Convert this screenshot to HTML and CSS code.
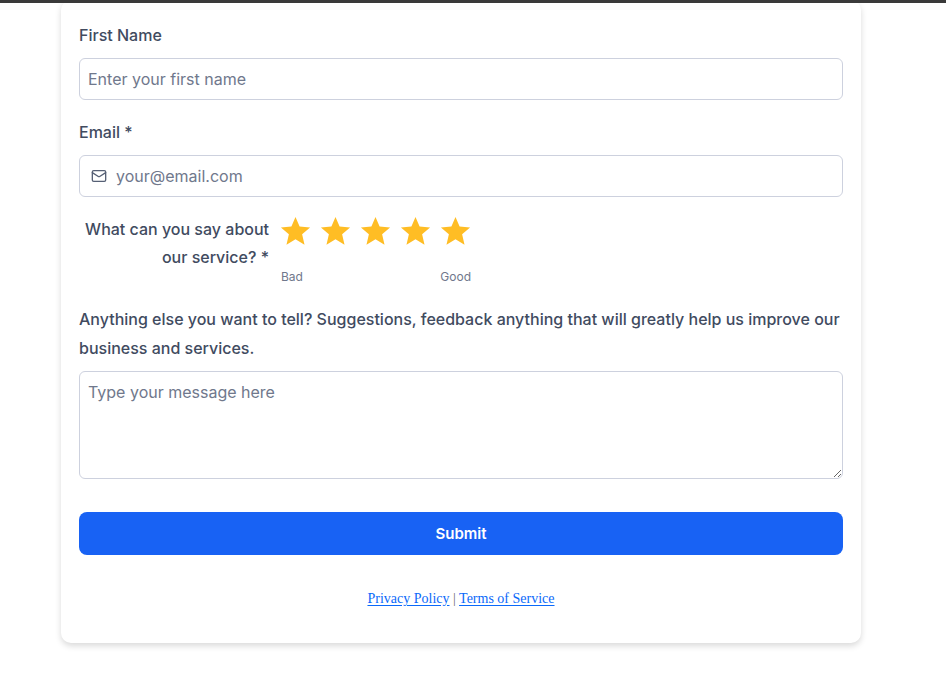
FILE: index.html
```html
<html>
<head>
<title>Feedback form</title>
<link rel="stylesheet" href="styles.css">
</head>
<body>
<div class='topbar'></div>
<div class='card'>
  <form>
    <div class='field first'>
      <label>First Name</label>
      <div class='input'><span class='placeholder'>Enter your first name</span></div>
    </div>
    <div class='field email'>
      <label>Email *</label>
      <div class='input'>
        <svg viewBox="0 0 24 24" width="16" height="16" fill="none" stroke="#566075" stroke-width="2" stroke-linecap="round" stroke-linejoin="round">
          <rect x="2" y="4" width="20" height="16" rx="2"/>
          <path d="M22 7l-8.97 5.7a1.94 1.94 0 0 1-2.06 0L2 7"/>
        </svg>
        <span class='placeholder'>your@email.com</span>
      </div>
    </div>
    <div class='rating'>
      <div class='question'>What can you say about our service? *</div>
      <div class='scale'>
        <div class='stars'>
          <svg viewBox="0 0 24 24"><path d="M12 17.27L18.18 21l-1.64-7.03L22 9.24l-7.19-.61L12 2 9.19 8.63 2 9.24l5.46 4.73L5.82 21z"/></svg>
          <svg viewBox="0 0 24 24"><path d="M12 17.27L18.18 21l-1.64-7.03L22 9.24l-7.19-.61L12 2 9.19 8.63 2 9.24l5.46 4.73L5.82 21z"/></svg>
          <svg viewBox="0 0 24 24"><path d="M12 17.27L18.18 21l-1.64-7.03L22 9.24l-7.19-.61L12 2 9.19 8.63 2 9.24l5.46 4.73L5.82 21z"/></svg>
          <svg viewBox="0 0 24 24"><path d="M12 17.27L18.18 21l-1.64-7.03L22 9.24l-7.19-.61L12 2 9.19 8.63 2 9.24l5.46 4.73L5.82 21z"/></svg>
          <svg viewBox="0 0 24 24"><path d="M12 17.27L18.18 21l-1.64-7.03L22 9.24l-7.19-.61L12 2 9.19 8.63 2 9.24l5.46 4.73L5.82 21z"/></svg>
        </div>
        <div class='ends'><span>Bad</span><span>Good</span></div>
      </div>
    </div>
    <div class='field message'>
      <label>Anything else you want to tell? Suggestions, feedback anything that will greatly help us improve our business and services.</label>
      <textarea placeholder="Type your message here"></textarea>
    </div>
    <div class='submit'>Submit</div>
  </form>
  <div class='links'><a href='#'>Privacy Policy</a> | <a href='#'>Terms of Service</a></div>
</div>
</body>
</html>
```

FILE: styles.css
```css
html, body{
  margin:0px;
  height:676px;
  overflow:hidden;
  background:rgb(255,255,255);
}
body{
  font-family:Inter, "Liberation Sans", sans-serif;
  color:rgb(65,75,95);
}

.topbar{
  position:relative;
  z-index:1;
  height:3px;
  background:rgb(58,58,58);
}

.card{
  box-sizing:border-box;
  width:800px;
  height:643px;
  margin:-3px 0px 0px 61px;
  padding:21px 18px 0px 18px;

  background:rgb(255,255,255);
  border-radius:10px;
  box-shadow:0px 3px 6px 0px rgba(0,0,0,0.15);
}

label{
  display:block;
  font-size:16px;
  font-weight:500;
  line-height:28px;
}

.field.first{
  margin-bottom:18px;
}
.field .input{
  display:flex;
  align-items:center;
  gap:9px;

  box-sizing:border-box;
  height:42px;
  margin-top:9px;
  padding:0px 8px;

  border:1px solid rgb(205,209,222);
  border-radius:6px;
}
.field.email .input{
  padding:0px 11px;
}
.placeholder{
  font-size:16px;
  color:rgb(112,120,140);
}

.rating{
  display:flex;
  gap:12px;
  margin-top:18px;
}
.question{
  width:190px;
  font-size:16px;
  font-weight:500;
  line-height:28px;
  text-align:right;
}
.scale{
  width:190px;
}
.stars{
  display:flex;
  gap:5px;
  height:37px;
  margin:-1px 0px 0px -3px;
}
.stars svg{
  flex:none;
  width:35px;
  height:35px;
  fill:rgb(255,189,36);
}
.ends{
  display:flex;
  justify-content:space-between;
  margin-top:18px;
  font-size:12px;
  line-height:16px;
  color:rgb(112,120,140);
}

.field.message{
  margin-top:20px;
}
.field.message label{
  line-height:29px;
}
textarea{
  display:block;
  box-sizing:border-box;
  width:764px;
  height:108px;
  margin-top:8px;
  padding:8px;

  font-family:Inter, "Liberation Sans", sans-serif;
  font-size:16px;
  line-height:24px;

  border:1px solid rgb(205,209,222);
  border-radius:6px;
}
textarea::placeholder{
  color:rgb(112,120,140);
}

.submit{
  height:43px;
  margin-top:33px;

  font-size:15px;
  font-weight:600;
  line-height:43px;
  text-align:center;
  color:rgb(255,255,255);

  background:rgb(24,98,244);
  border-radius:8px;
}

.links{
  margin-top:35px;
  font-family:"Liberation Serif", serif;
  font-size:14px;
  line-height:18px;
  text-align:center;
  color:rgb(110,110,110);
}
.links a{
  color:rgb(10,105,250);
  text-underline-offset:2px;
}
```
